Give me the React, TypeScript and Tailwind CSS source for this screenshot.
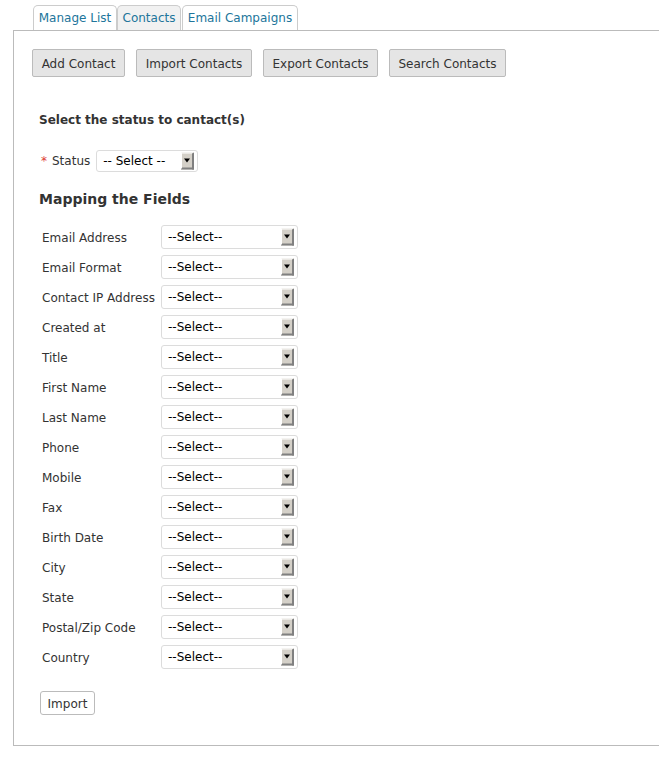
import React from 'react';

const fields = [
  'Email Address',
  'Email Format',
  'Contact IP Address',
  'Created at',
  'Title',
  'First Name',
  'Last Name',
  'Phone',
  'Mobile',
  'Fax',
  'Birth Date',
  'City',
  'State',
  'Postal/Zip Code',
  'Country',
];

const buttons = [
  { label: 'Add Contact', w: 'w-[93px]' },
  { label: 'Import Contacts', w: 'w-[116px]' },
  { label: 'Export Contacts', w: 'w-[115px]' },
  { label: 'Search Contacts', w: 'w-[117px]' },
];

const Arrow = () => (
  <div className="absolute right-[3px] top-1/2 -translate-y-1/2 w-[13px] h-[17px] bg-[#d4d0c8] border-t border-l border-t-white border-l-white border-r-2 border-b-2 border-r-[#808080] border-b-[#808080] flex items-center justify-center">
    <div className="w-0 h-0 border-l-[3px] border-r-[3px] border-t-[4px] border-l-transparent border-r-transparent border-t-black" />
  </div>
);

const FakeSelect = ({ text, width, height }: { text: string; width: string; height: string }) => (
  <div className={`relative ${width} ${height} bg-white border border-[#dcdcdc] rounded-[3px] flex items-center pl-[6px] text-[12px] text-black`}>
    {text}
    <Arrow />
  </div>
);

const App = () => {
  return (
    <div className="w-[659px] h-[763px] overflow-hidden bg-white pl-[13px] pt-[5px]" style={{ fontFamily: '"DejaVu Sans", Verdana, sans-serif' }}>
      {/* tabs */}
      <div className="flex items-end pl-[20px]">
        <div className="w-[84px] h-[25px] flex items-center justify-center text-[12px] text-[#21759b] border border-b-0 border-[#cccccc] rounded-t-[5px] bg-white">
          Manage List
        </div>
        <div className="w-[64px] h-[25px] flex items-center justify-center text-[12px] text-[#21759b] border border-b-0 border-[#cccccc] rounded-t-[5px] bg-[#f1f1f1]">
          Contacts
        </div>
        <div className="w-[116px] h-[25px] ml-[1px] flex items-center justify-center text-[12px] text-[#21759b] border border-b-0 border-[#cccccc] rounded-t-[5px] bg-white">
          Email Campaigns
        </div>
      </div>

      {/* panel */}
      <div className="w-[700px] border border-r-0 border-[#bbbbbb] pl-[18px] pt-[18px] pb-[30px]">
        <div className="flex gap-[11px]">
          {buttons.map((b) => (
            <div key={b.label} className={`${b.w} h-[28px] pt-[1px] flex items-center justify-center bg-[#e5e5e5] border border-[#bbbbbb] rounded-[2px] text-[12px] text-[#333333]`}>
              {b.label}
            </div>
          ))}
        </div>

        <div className="pl-[7px]">
          <div className="mt-[34px] h-[16px] leading-[16px] pt-[1px] text-[12px] font-bold text-[#333333]">
            Select the status to cantact(s)
          </div>

          <div className="mt-[22px] flex items-center h-[22px] pt-[1px] text-[12px] text-[#333333]">
            <span className="pl-[2px] pr-[5px] text-[#dd3d36]">*</span>
            <span className="mr-[6px]">Status</span>
            <FakeSelect text="-- Select --" width="w-[102px]" height="h-[22px]" />
          </div>

          <div className="mt-[19px] h-[18px] leading-[18px] text-[14px] font-bold text-[#333333]">
            Mapping the Fields
          </div>

          <div className="mt-[14px] flex flex-col">
            {fields.map((f) => (
              <div key={f} className="h-[30px] flex items-center">
                <div className="w-[122px] pl-[3px] pt-[1px] text-[12px] text-[#333333] whitespace-nowrap">{f}</div>
                <FakeSelect text="--Select--" width="w-[137px]" height="h-[24px]" />
              </div>
            ))}
          </div>

          <div className="mt-[19px] flex">
            <div className="ml-[1px] w-[55px] h-[24px] pt-[1px] flex items-center justify-center bg-white border border-[#bbbbbb] rounded-[3px] text-[12px] text-[#333333]">
              Import
            </div>
          </div>
        </div>
      </div>
    </div>
  );
};

export default App;
